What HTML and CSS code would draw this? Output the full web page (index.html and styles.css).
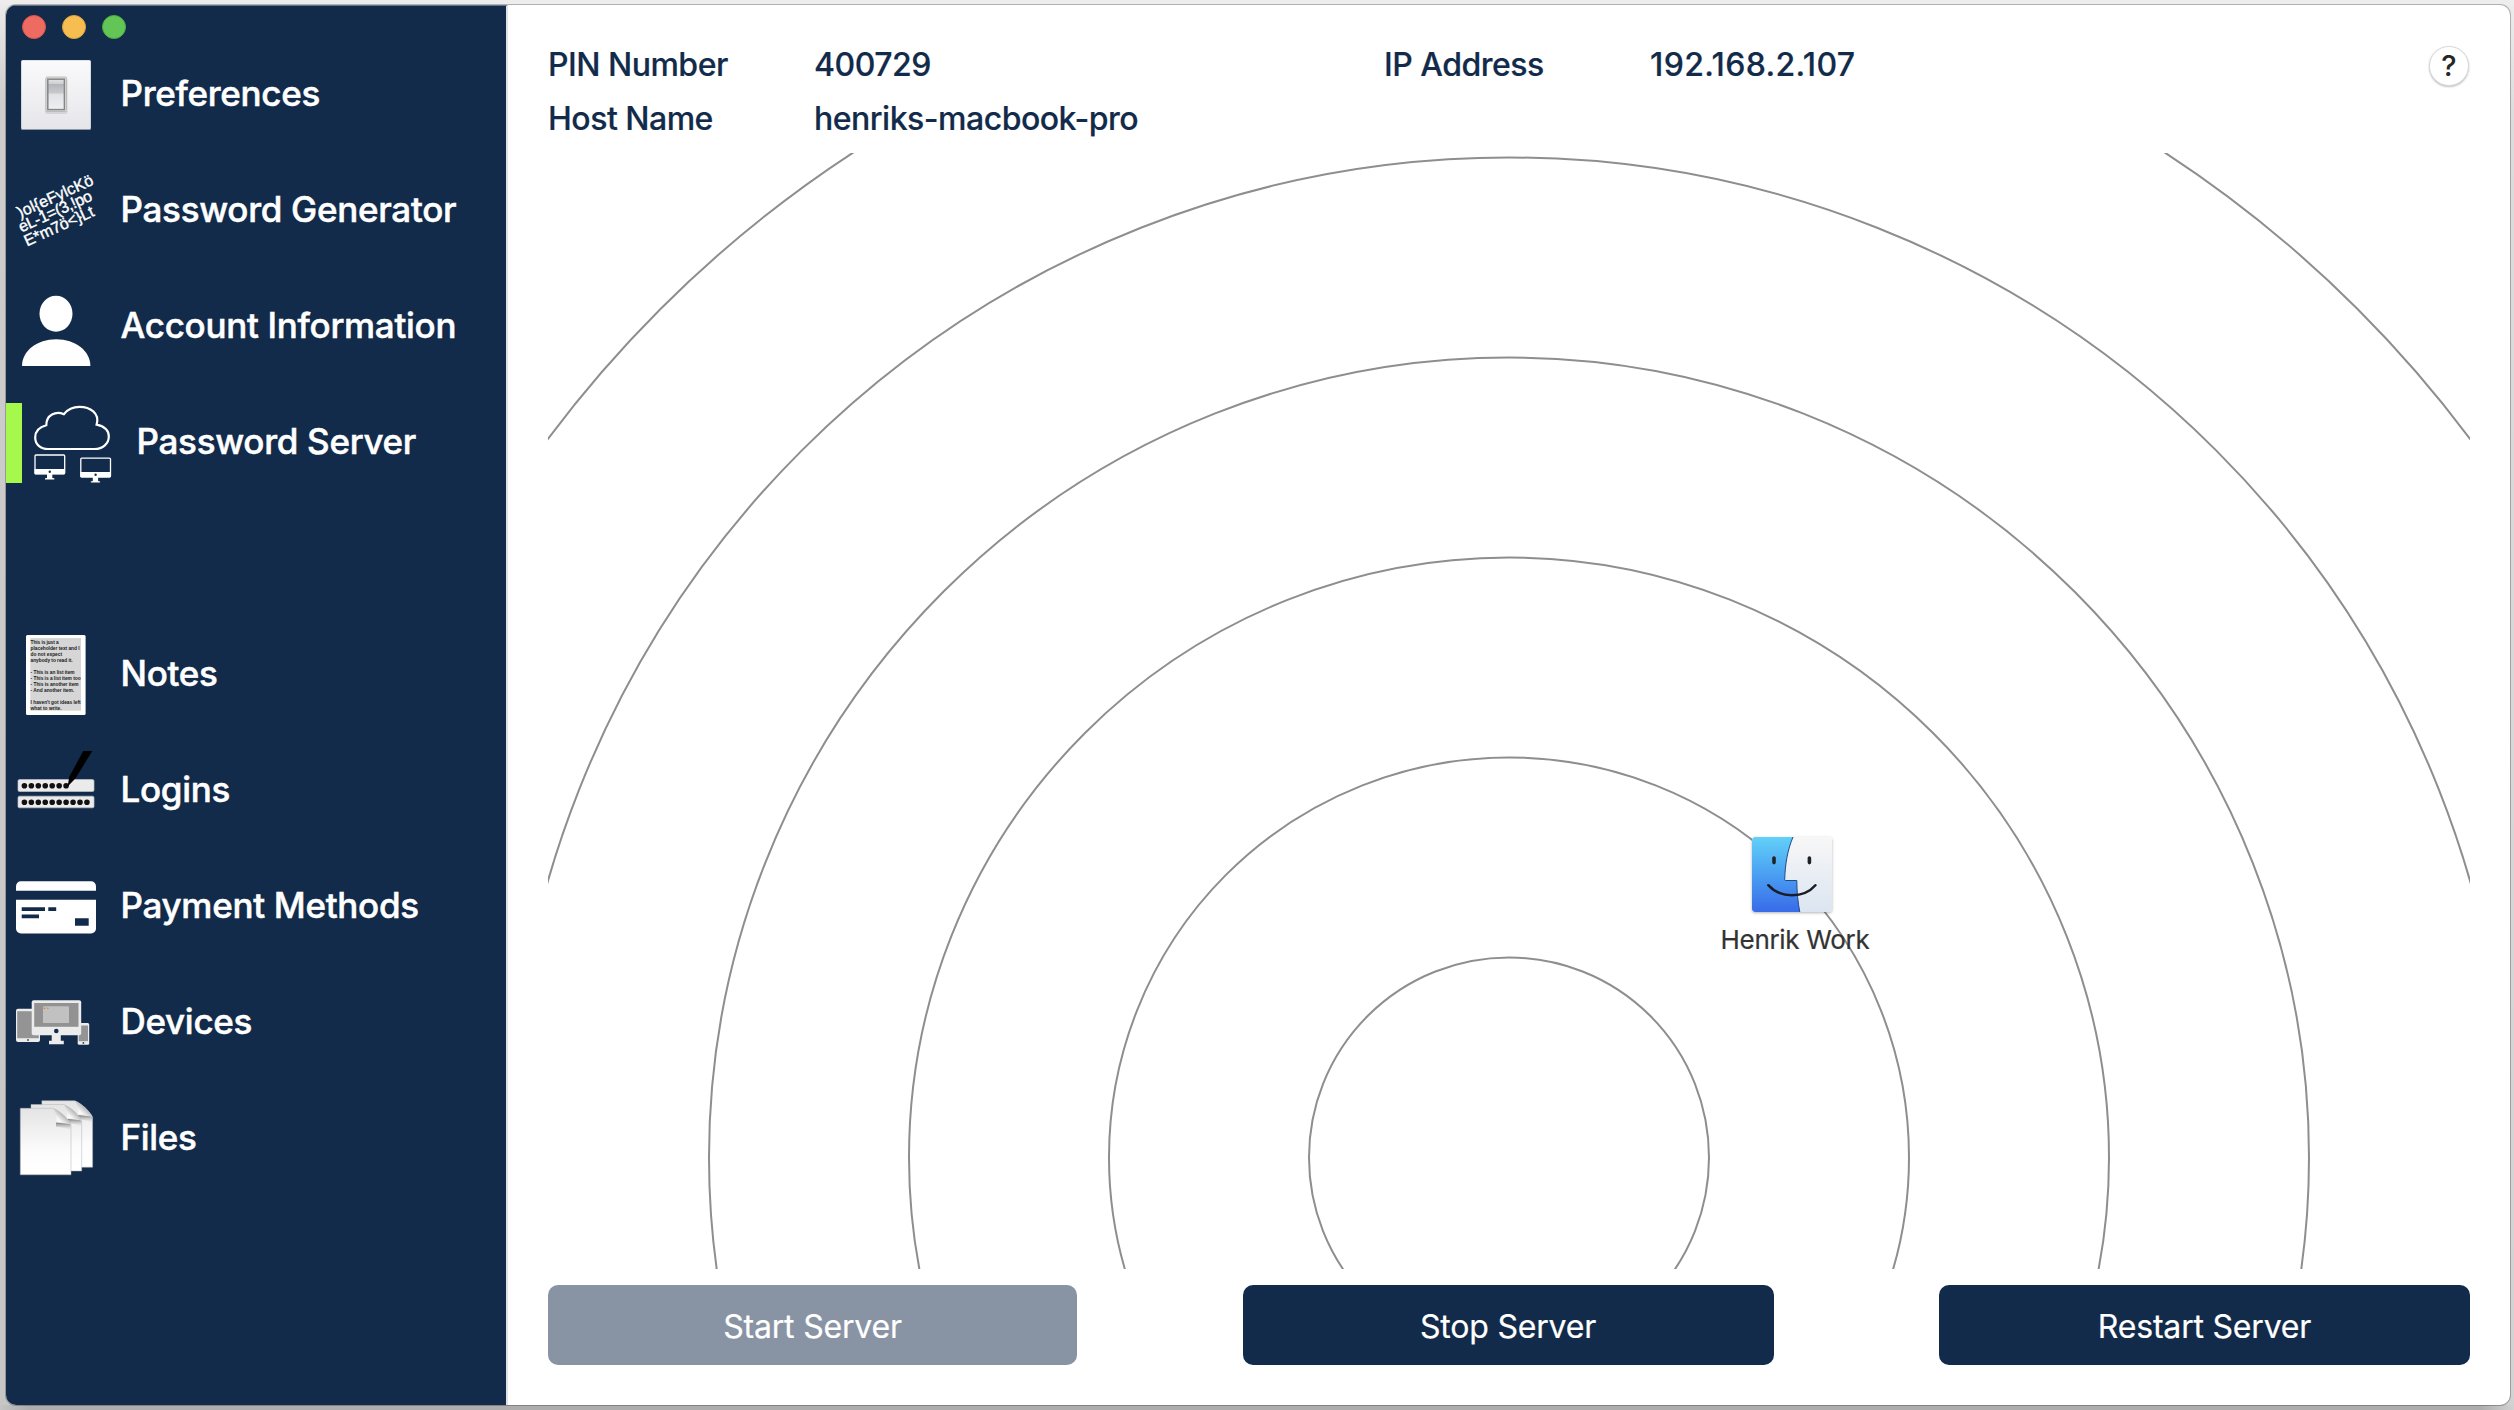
FILE: index.html
```
<!DOCTYPE html>
<html lang="en">
<head>
<meta charset="utf-8">
<title>Password Server</title>
<link rel="stylesheet" href="styles.css">
</head>
<body>
<div class="window">
  <aside class="sidebar">
    <div class="lights"><i class="light red"></i><i class="light yellow"></i><i class="light green"></i></div>
    <nav class="nav">
      <a class="item">
        <svg class="icon" viewBox="0 0 80 80">
          <defs>
            <linearGradient id="plate" x1="0" y1="0" x2="0" y2="1"><stop offset="0" stop-color="#fafafc"/><stop offset="1" stop-color="#e6e6ea"/></linearGradient>
            <linearGradient id="rocker" x1="0" y1="0" x2="0" y2="1"><stop offset="0" stop-color="#e2e2e4"/><stop offset=".14" stop-color="#d2d2d4"/><stop offset=".16" stop-color="#b4b5ba"/><stop offset=".45" stop-color="#c8c9cd"/><stop offset=".5" stop-color="#e1e2e6"/><stop offset="1" stop-color="#f0f0f3"/></linearGradient>
          </defs>
          <rect x="5" y="5" width="70" height="70" rx="1.5" fill="#8d96a4"/>
          <rect x="5.3" y="5.2" width="69.4" height="68.8" rx="1.5" fill="url(#plate)"/>
          <rect x="29" y="23" width="22.5" height="36" rx="2" fill="#c9cacd" opacity=".7"/>
          <rect x="30" y="22" width="20.5" height="34.5" rx="1" fill="#dedfdd" stroke="#b2b4b4" stroke-width=".8"/>
          <rect x="31.8" y="24.2" width="16.6" height="30.4" fill="url(#rocker)" stroke="#848686" stroke-width="1.5"/>
        </svg>
        <span class="label">Preferences</span>
      </a>
      <a class="item">
        <svg class="icon" viewBox="0 0 80 80" fill="#fff">
          <g class="scramble">
            <text transform="translate(4 47) rotate(-24.5)" textLength="82">)ol{eFylcKö</text>
            <text transform="translate(5.5 61.500) rotate(-24.5)" textLength="79">eL-1=(3,!po</text>
            <text transform="translate(11 75.500) rotate(-24.5)" textLength="75">E*m7ö&lt;}Lt</text>
          </g>
        </svg>
        <span class="label">Password Generator</span>
      </a>
      <a class="item">
        <svg class="icon" viewBox="0 0 80 80" fill="#fff">
          <ellipse cx="40" cy="26.7" rx="16.5" ry="18"/>
          <path d="M6 79C6 64 21 52.3 40.2 52.3S74.4 64 74.4 79Z"/>
        </svg>
        <span class="label">Account Information</span>
      </a>
      <a class="item active">
        <svg class="icon" viewBox="0 0 80 80" fill="none" stroke="#fff">
          <path stroke-width="2.2" d="M16 46H62.5C71 46 76.8 40.5 76.8 33.5C76.8 27 72 23.2 64.6 21.6C68 10 58 3.9 47.5 3.9C41 3.9 35.5 6.5 31.8 11.2C24 7.5 14 12 14.3 22.2C7 24 3.2 28.5 3.2 34.5C3.2 41.5 8.5 46 16 46Z"/>
          <g id="screen">
            <rect x="3" y="52" width="29.7" height="18.7" rx="1" stroke-width="1.3"/>
            <path fill="#fff" stroke="none" d="M2.5 66H33V70.5Q33 71.5 32 71.5H20.3V75L22.3 75.3V76.5H13V75.3L15 75V71.5H3.5Q2.5 71.5 2.5 70.5Z"/>
            <circle cx="17.8" cy="68.7" r="1.2" fill="#122b4a" stroke="none"/>
          </g>
          <use href="#screen" x="45.8" y="3.1"/>
        </svg>
        <span class="label">Password Server</span>
      </a>
      <a class="item gap-before">
        <svg class="icon" viewBox="0 0 80 80">
          <rect x="10" y="0" width="59.6" height="80" rx="1.5" fill="#fff"/>
          <rect x="14.3" y="3" width="50.7" height="72.7" fill="#d6d6d6"/>
          <g class="memo">
            <text x="14.6" y="8.9" textLength="28">This is just a</text>
            <text x="14.6" y="15" textLength="49">placeholder text and I</text>
            <text x="14.6" y="21" textLength="31.5">do not expect</text>
            <text x="14.6" y="27" textLength="42">anybody to read it.</text>
            <text x="14.6" y="39" textLength="44">- This is an list item</text>
            <text x="14.6" y="45" textLength="50">- This is a list item too</text>
            <text x="14.6" y="51" textLength="48">- This is another item</text>
            <text x="14.6" y="57" textLength="43.5">- And another item.</text>
            <text x="14.6" y="69" textLength="50">I haven't got ideas left</text>
            <text x="14.6" y="75" textLength="31">what to write.</text>
          </g>
        </svg>
        <span class="label">Notes</span>
      </a>
      <a class="item">
        <svg class="icon" viewBox="0 0 80 80">
          <g fill="#ebebeb" stroke="#bfc2c5" stroke-width=".7"><rect x="2" y="28.5" width="76" height="12" rx="1.5"/><rect x="2" y="45.2" width="76" height="11.6" rx="1.5"/></g>
          <g fill="none" stroke="#111" stroke-width="5.6" stroke-linecap="round" stroke-dasharray="0 6.95">
            <path d="M8.4 34.7H50.5"/><path d="M8.4 51.3H71.5"/>
          </g>
          <path d="M67.3 0H76.3L59.5 27.3L51.5 35.8L53.3 25.7Z"/>
        </svg>
        <span class="label">Logins</span>
      </a>
      <a class="item">
        <svg class="icon" viewBox="0 0 80 80">
          <rect y="14.2" width="80" height="52.2" rx="5" fill="#fff"/>
          <path fill="#122b4a" d="M0 23.8H80V32.7H0ZM5.7 40.2H29V44H5.7ZM32.3 40.2H40.2V44H32.3ZM5.7 47.6H23V51.3H5.7ZM59 51.3H72.7V58.7H59Z"/>
        </svg>
        <span class="label">Payment Methods</span>
      </a>
      <a class="item">
        <svg class="icon" viewBox="0 0 80 80" fill="#ececec">
          <rect y="25.7" width="24" height="33.4" rx="2"/><rect x="1.2" y="28.2" width="21.6" height="27" fill="#949494"/><circle cx="12" cy="57.1" r="1" fill="#555"/>
          <rect x="61.7" y="40" width="11.5" height="21.7" rx="1.5"/><rect x="62.7" y="42.5" width="9.3" height="15.7" fill="#949494"/><circle cx="67.4" cy="59.9" r=".9" fill="#333"/>
          <rect x="15.7" y="17.3" width="49.5" height="35" rx="2"/>
          <rect x="18.2" y="20" width="44.3" height="23.8" fill="#929292"/>
          <rect x="27" y="23.3" width="26" height="16.8" rx="1.2" fill="#c1c1c1"/>
          <circle cx="28.5" cy="25.2" r=".8" fill="#ff5b4d"/><circle cx="30.2" cy="25.2" r=".8" fill="#e7b83e"/><circle cx="31.9" cy="25.2" r=".8" fill="#52d04c"/>
          <circle cx="40.3" cy="48" r="2.3" fill="#122b4a"/>
          <path d="M35.7 52H44.8V57.8H47.8V61.3H33V57.8H35.7Z"/>
        </svg>
        <span class="label">Devices</span>
      </a>
      <a class="item">
        <svg class="icon" viewBox="0 0 80 80">
          <defs>
            <linearGradient id="paper" x1="0" y1="0" x2="0" y2="1"><stop offset="0" stop-color="#e4e4e4"/><stop offset=".65" stop-color="#fcfcfc"/><stop offset="1" stop-color="#fff"/></linearGradient>
            <linearGradient id="fold" x1="1" y1="0" x2="0" y2="1"><stop offset=".4" stop-color="#b4b4b4"/><stop offset=".68" stop-color="#f8f8f8"/></linearGradient>
            <linearGradient id="shade" x1="0" y1="0" x2="0" y2="1"><stop offset="0" stop-color="#777"/><stop offset="1" stop-color="#eee" stop-opacity="0"/></linearGradient>
            <g id="sheet">
              <path d="M4.3 9.3H37C41 10.5 53 20 55 26V75.8H4.3Z" fill="url(#paper)" stroke="#aeb3ba" stroke-width=".5"/>
              <path d="M40 23.5L54.5 25V32C51 29 46 28 40 28Z" fill="url(#shade)"/>
              <path d="M37 9.3C40 13 41 18 40.5 23.5C46 22.5 51 23.5 55 26C52 19 44 11.5 37 9.3Z" fill="url(#fold)"/>
            </g>
          </defs>
          <use href="#sheet" x="21.6" y="-7.6"/><use href="#sheet" x="10.7" y="-3.8"/><use href="#sheet"/>
        </svg>
        <span class="label">Files</span>
      </a>
    </nav>
  </aside>
  <main class="main">
    <header class="info">
      <dl class="facts">
        <dt>PIN Number</dt><dd>400729</dd>
        <dt>IP Address</dt><dd class="address">192.168.2.107</dd>
        <dt>Host Name</dt><dd>henriks-macbook-pro</dd>
      </dl>
      <button class="help">?</button>
    </header>
    <section class="radar">
      <svg class="rings" viewBox="0 0 1922 1116" fill="none" stroke="#8e8e8e" stroke-width="2">
        <circle cx="961" cy="1004.5" r="200"/><circle cx="961" cy="1004.5" r="400"/><circle cx="961" cy="1004.5" r="600"/><circle cx="961" cy="1004.5" r="800"/><circle cx="961" cy="1004.5" r="1000"/><circle cx="961" cy="1004.5" r="1200"/>
      </svg>
      <div class="peer">
        <svg class="finder" viewBox="0 0 80 75">
          <defs>
            <linearGradient id="blue" x1="0" y1="0" x2="0" y2="1"><stop offset="0" stop-color="#62d0f8"/><stop offset=".5" stop-color="#4a9ff2"/><stop offset="1" stop-color="#386be8"/></linearGradient>
            <linearGradient id="pale" x1="0" y1="0" x2="0" y2="1"><stop offset="0" stop-color="#f7f7f7"/><stop offset="1" stop-color="#dbe5f1"/></linearGradient>
          </defs>
          <rect width="80" height="75" rx="3" fill="url(#pale)"/>
          <path d="M3 0H41C35.500 13 33.200 27 32.700 42.500Q32.700 43.500 33.700 43.500H44.800C44.800 55 46 66 47.800 75H3Q0 75 0 72V3Q0 0 3 0Z" fill="url(#blue)"/>
          <path d="M41 0C35.500 13 33.200 27 32.700 42.500Q32.700 43.500 33.700 43.500H44.800C44.800 55 46 66 47.800 75" fill="none" stroke="#1c4c87" stroke-width="1"/>
          <path d="M22 21V25.600M57.400 21V25.600" stroke="#202226" stroke-width="3.600" stroke-linecap="round"/>
          <path d="M16.300 48.200C28 61.500 52 61.500 63.400 48.200" fill="none" stroke="#1b1d24" stroke-width="2.500" stroke-linecap="round"/>
        </svg>
        <span class="peer-name">Henrik Work</span>
      </div>
    </section>
    <footer class="actions">
      <button class="btn" disabled>Start Server</button>
      <button class="btn">Stop Server</button>
      <button class="btn">Restart Server</button>
    </footer>
  </main>
</div>
</body>
</html>
```
FILE: styles.css
```
* { box-sizing: border-box; }

body {
  margin: 0;
  height: 1410px;
  padding: 5px 4px 5px 6px;
  background:
    linear-gradient(#ededed, #ededed) top / 100% 5px no-repeat,
    linear-gradient(90deg, #c4c4c4, #adadad 30px, #adadad 2480px, #d2d2d2) bottom / 100% 5px no-repeat,
    linear-gradient(#ececec, #cdcdcd 100px, #c6c6c6) left / 50% 100% no-repeat,
    linear-gradient(#ececec, #dcdcdc 120px, #d2d2d2) right / 50% 100% no-repeat;
  font-family: Inter, "Liberation Sans", sans-serif;
}

.window {
  display: flex;
  height: 1400px;
  border-radius: 10px;
  overflow: hidden;
  background: #fff;
  box-shadow: 0 0 0 1px rgba(0, 0, 0, .25);
}

.sidebar {
  width: 502px;
  flex: none;
  background: #122b4a;
  border-right: 2px solid #dfe1e5;
  border-top: 1px solid #667386;
}

.lights { display: flex; gap: 16px; padding: 9px 0 0 16px; height: 49px; }
.light { width: 24px; height: 24px; border-radius: 50%; border: 1px solid; }
.red { background: #ed6b60; border-color: #da554b; }
.yellow { background: #f6be50; border-color: #dca53c; }
.green { background: #62c555; border-color: #4cab40; }

.nav { display: flex; flex-direction: column; gap: 36px; }
.item { display: flex; align-items: center; height: 80px; padding-left: 10px; gap: 24.5px; }
.item.active { border-left: 16px solid #a6f84c; }
.gap-before { margin-top: 116px; }
.icon { width: 80px; height: 80px; flex: none; overflow: visible; }
.label {
  color: #fff;
  font-size: 35px;
  font-weight: 500;
  line-height: 40px;
  letter-spacing: -.3px;
  padding-bottom: 4px;
  white-space: nowrap;
  -webkit-text-stroke: .5px #fff;
}
.scramble { font: 500 16px "Liberation Sans", sans-serif; stroke: #fff; stroke-width: .4px; }
.memo { font: bold 4.8px "Liberation Sans", sans-serif; fill: #181818; white-space: pre; }

.main {
  flex: 1;
  display: flex;
  flex-direction: column;
  padding: 32px 40px 40px;
}

.info { display: flex; justify-content: space-between; height: 116px; }
.facts {
  display: grid;
  grid-template-columns: 266px 570px 266px auto;
  grid-auto-rows: 54px;
  margin: 0;
  color: #122b4a;
  font-size: 32px;
  font-weight: 500;
  line-height: 55px;
  letter-spacing: -.5px;
  white-space: nowrap;
  -webkit-text-stroke: .2px #122b4a;
}
.facts dd { margin: 0; }
.facts .address { letter-spacing: .36px; }

.help {
  width: 40px;
  height: 40px;
  margin: 9px 1px 0 0;
  padding: 0;
  border: 1px solid #d9d9d9;
  border-radius: 50%;
  background: #fff;
  box-shadow: 0 1px 2px rgba(0, 0, 0, .25);
  color: #262626;
  font: 500 29px/38px Inter, sans-serif;
}

.radar { position: relative; height: 1116px; }
.rings { display: block; width: 1922px; height: 1116px; }
.peer {
  position: absolute;
  left: 1171px;
  top: 684px;
  width: 152px;
  display: flex;
  flex-direction: column;
  align-items: center;
  gap: 12px;
}
.finder {
  width: 80px;
  height: 75px;
  margin-right: 7px;
  border-radius: 3px;
  box-shadow: 0 1px 3px rgba(0, 0, 0, .3);
}
.peer-name {
  color: #333;
  font-size: 26px;
  line-height: 32px;
  letter-spacing: -.3px;
  white-space: nowrap;
  -webkit-text-stroke: .2px #333;
}

.actions {
  display: grid;
  grid-template-columns: 529px 531px 531px;
  justify-content: space-between;
  margin-top: 16px;
}
.btn {
  height: 80px;
  padding: 4px 0 0;
  border: 0;
  border-radius: 10px;
  background: #122b4a;
  color: #fff;
  font: 400 32px/40px Inter, sans-serif;
  letter-spacing: -.2px;
  -webkit-text-stroke: .2px #fff;
}
.btn:disabled { background: #8894a4; }
```
